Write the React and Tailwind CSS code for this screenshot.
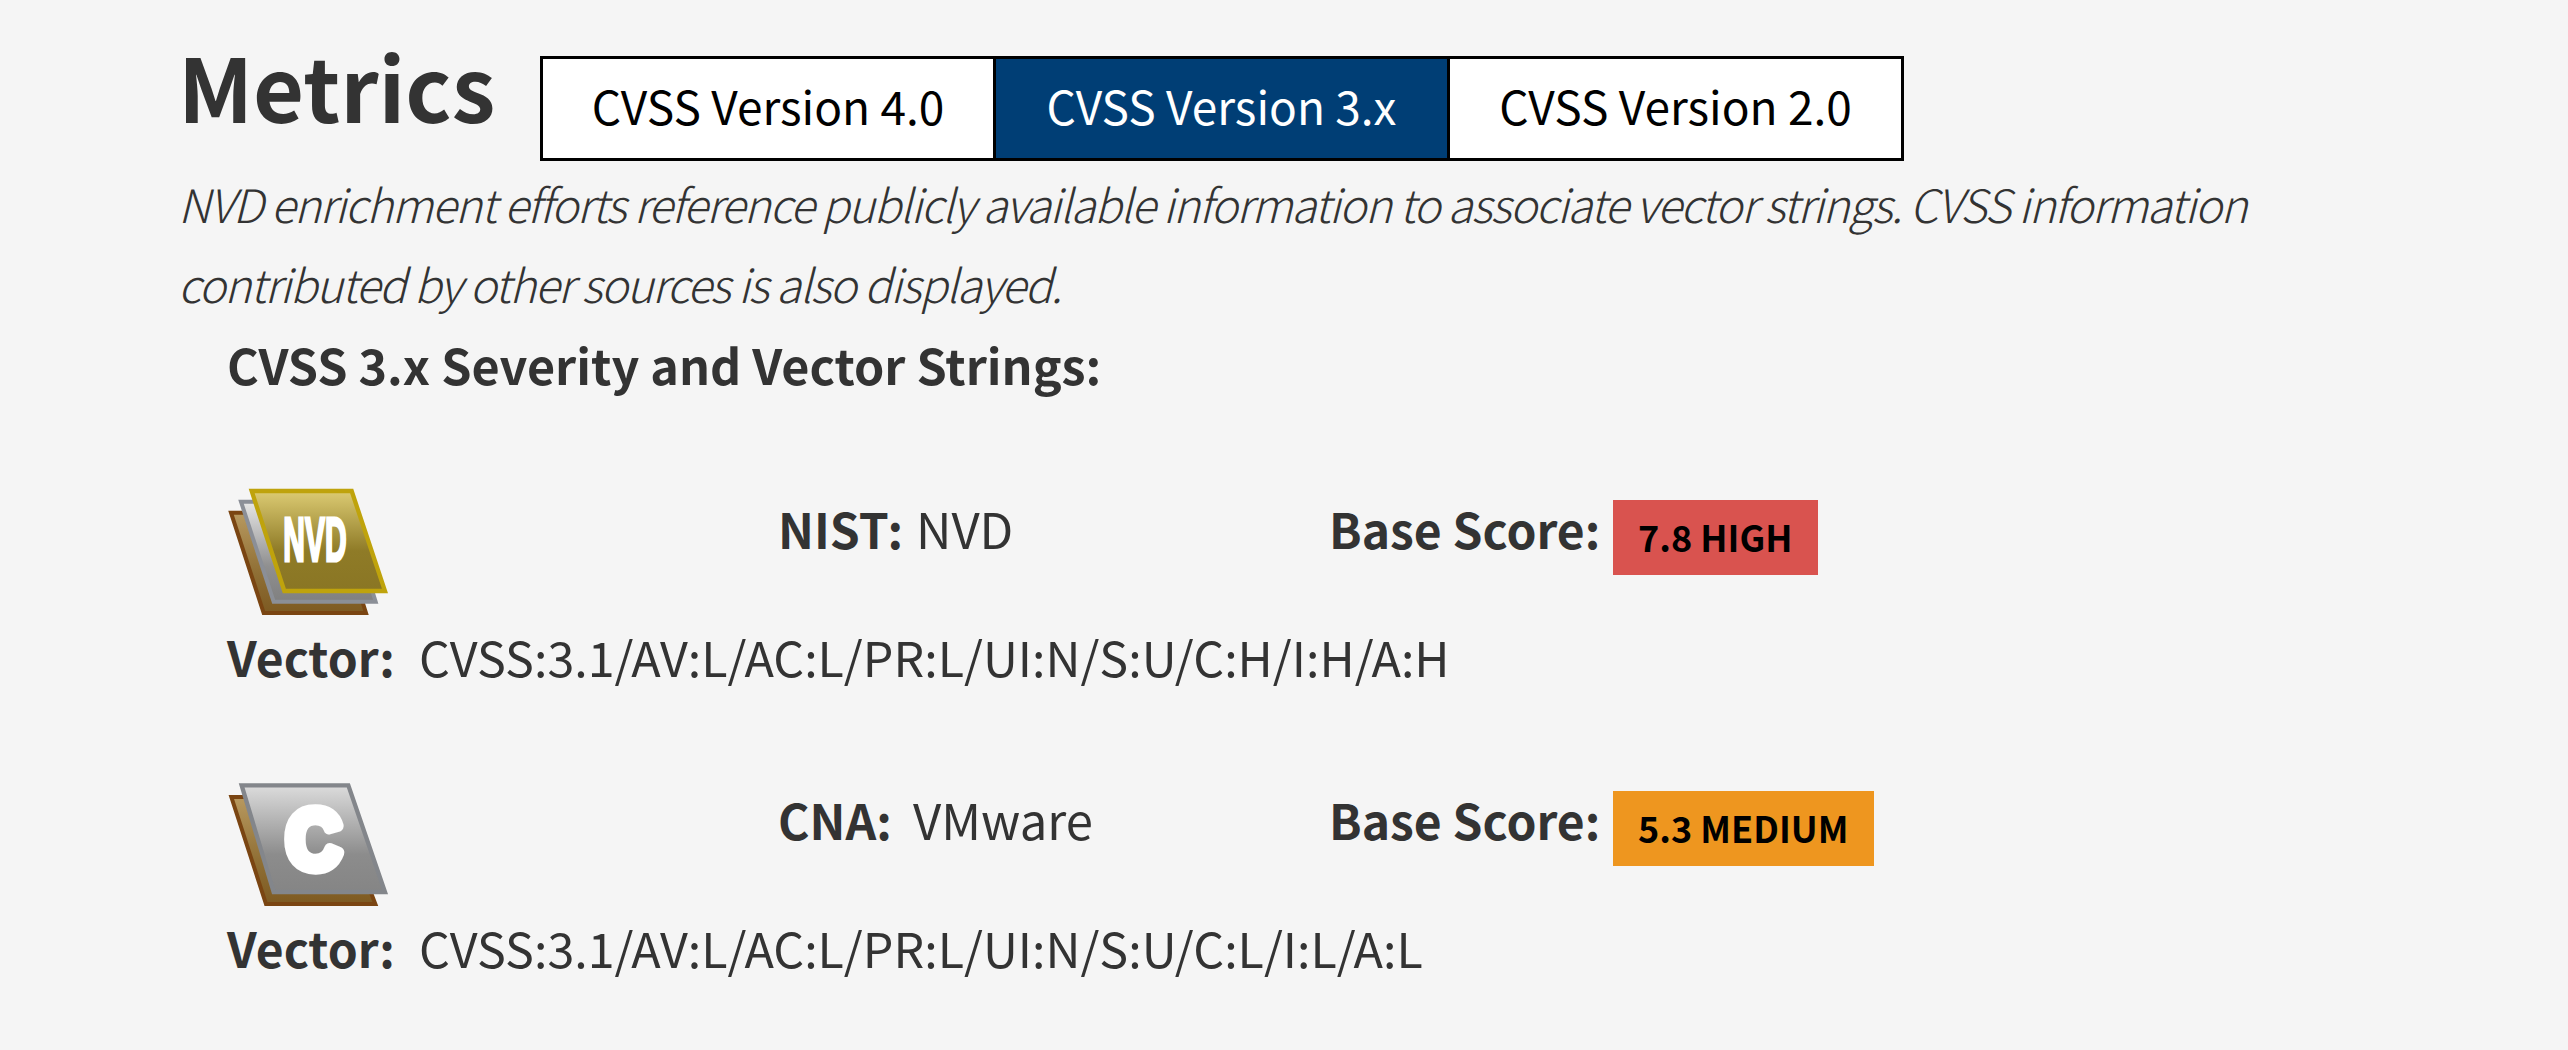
const F = "font-['Noto_Sans_CJK_SC','Source_Sans_Pro',sans-serif]";

function NvdIcon() {
  return (
    <svg width="220" height="150" viewBox="0 0 660 450" className="block">
      <defs>
        <linearGradient id="brown" x1="0" y1="0" x2="0" y2="1">
          <stop offset="0" stopColor="#b8995f" />
          <stop offset="0.6" stopColor="#8f6f35" />
          <stop offset="1" stopColor="#7d5a22" />
        </linearGradient>
        <linearGradient id="gray" x1="0" y1="0" x2="0" y2="1">
          <stop offset="0" stopColor="#e6e6e6" />
          <stop offset="0.65" stopColor="#8f8f8f" />
          <stop offset="1" stopColor="#808080" />
        </linearGradient>
        <linearGradient id="gold" x1="0" y1="0" x2="0" y2="1">
          <stop offset="0" stopColor="#dccb73" />
          <stop offset="0.6" stopColor="#8f7b27" />
          <stop offset="1" stopColor="#8a7624" />
        </linearGradient>
      </defs>
      <polygon points="90,101 400,101 495,402 188,402" fill="url(#brown)" stroke="#7a4512" strokeWidth="12" />
      <polygon points="120,68 430,68 524,368 218,368" fill="url(#gray)" stroke="#8b8f97" strokeWidth="12" />
      <polygon points="152,36 452,36 552,336 250,336" fill="url(#gold)" stroke="#bfa30c" strokeWidth="13" />
      <text x="247" y="245" fill="#fff" stroke="#fff" strokeWidth="9" fontFamily="'Liberation Sans',sans-serif" fontWeight="700" fontSize="188" textLength="190" lengthAdjust="spacingAndGlyphs">NVD</text>
    </svg>
  );
}

function CnaIcon() {
  return (
    <svg width="220" height="150" viewBox="0 0 660 450" className="block">
      <defs>
        <linearGradient id="brown2" x1="0" y1="0" x2="0" y2="1">
          <stop offset="0" stopColor="#b8995f" />
          <stop offset="0.6" stopColor="#8f6f35" />
          <stop offset="1" stopColor="#7d5a22" />
        </linearGradient>
        <linearGradient id="gray2" x1="0" y1="0" x2="0" y2="1">
          <stop offset="0" stopColor="#dcdcdc" />
          <stop offset="0.65" stopColor="#8c8c8c" />
          <stop offset="1" stopColor="#858585" />
        </linearGradient>
      </defs>
      <polygon points="91,81 400,81 523,402 195,402" fill="url(#brown2)" stroke="#7a4512" strokeWidth="12" />
      <polygon points="122,46 442,46 552,366 218,366" fill="url(#gray2)" stroke="#83868b" strokeWidth="13" />
      <text x="256" y="293" fill="#fff" stroke="#fff" strokeWidth="34" strokeLinejoin="round" fontFamily="'Liberation Sans',sans-serif" fontWeight="700" fontSize="248" textLength="165" lengthAdjust="spacingAndGlyphs">C</text>
    </svg>
  );
}

function Row({ icon, label, source, badge, badgeBg, badgeW, vector, nameW }) {
  return (
    <div className="flex flex-col">
      <div className="flex h-[150px] items-start">
        <div className="w-[598px] shrink-0 pl-[21px] pt-[1px]">{icon}</div>
        <div className="flex w-[551px] shrink-0 items-baseline pt-[22px] leading-[56px] text-[#333333]">
          <span className="text-[48px] font-bold" style={{ width: nameW }}>{label}</span>
          <span className="text-[49px] font-normal">{source}</span>
        </div>
        <div className="flex items-start pt-[22px]">
          <span className="w-[284px] shrink-0 text-[48px] font-bold leading-[56px] text-[#333333]">Base Score:</span>
          <span className={`flex h-[75px] items-center pb-[4px] pl-[25px] text-[36px] font-bold text-black ${badgeBg} ${badgeW}`}>{badge}</span>
        </div>
      </div>
      <div className="flex items-baseline pl-[47px] leading-[56px] text-[#333333]">
        <span className="w-[192px] shrink-0 text-[48px] font-bold">Vector:</span>
        <span className="text-[48.4px] font-normal">{vector}</span>
      </div>
    </div>
  );
}

export default function App() {
  return (
    <div className={`h-[1050px] w-[2568px] overflow-hidden bg-[#f5f5f5] pl-[180px] ${F}`}>
      <div className="flex h-[160px] items-start">
        <h2 className="-ml-[2px] w-[362px] shrink-0 pt-[33px] text-[88px] font-bold leading-[104px] text-[#333333]">Metrics</h2>
        <div className="mt-[56px] flex h-[105px] w-[1364px] border-[3px] border-black bg-white text-[46px] text-black">
          <div className="flex w-[453px] items-center justify-center border-r-[3px] border-black pb-[6px]">CVSS Version 4.0</div>
          <div className="flex w-[451px] items-center justify-center bg-[#003e75] pb-[6px] text-white">CVSS Version 3.x</div>
          <div className="flex flex-1 items-center justify-center border-l-[3px] border-black pb-[6px]">CVSS Version 2.0</div>
        </div>
      </div>
      <p className="m-0 -ml-[2px] w-[2120px] pt-[3px] text-[46px] font-light italic leading-[80px] tracking-[-1.55px] text-[#333333]">
        NVD enrichment efforts reference publicly available information to associate vector strings. CVSS information contributed by other sources is also displayed.
      </p>
      <h3 className="pl-[47px] pt-[11px] text-[48.5px] font-bold leading-[60px] text-[#333333]">CVSS 3.x Severity and Vector Strings:</h3>
      <div className="pt-[84px]">
        <Row icon={<NvdIcon />} label="NIST:" nameW="138px" source="NVD" badge="7.8 HIGH" badgeBg="bg-[#d9534f]" badgeW="w-[205px]" vector="CVSS:3.1/AV:L/AC:L/PR:L/UI:N/S:U/C:H/I:H/A:H" />
        <div className="h-[85px]" />
        <Row icon={<CnaIcon />} label="CNA:" nameW="135px" source="VMware" badge="5.3 MEDIUM" badgeBg="bg-[#ee961f]" badgeW="w-[261px]" vector="CVSS:3.1/AV:L/AC:L/PR:L/UI:N/S:U/C:L/I:L/A:L" />
      </div>
    </div>
  );
}
